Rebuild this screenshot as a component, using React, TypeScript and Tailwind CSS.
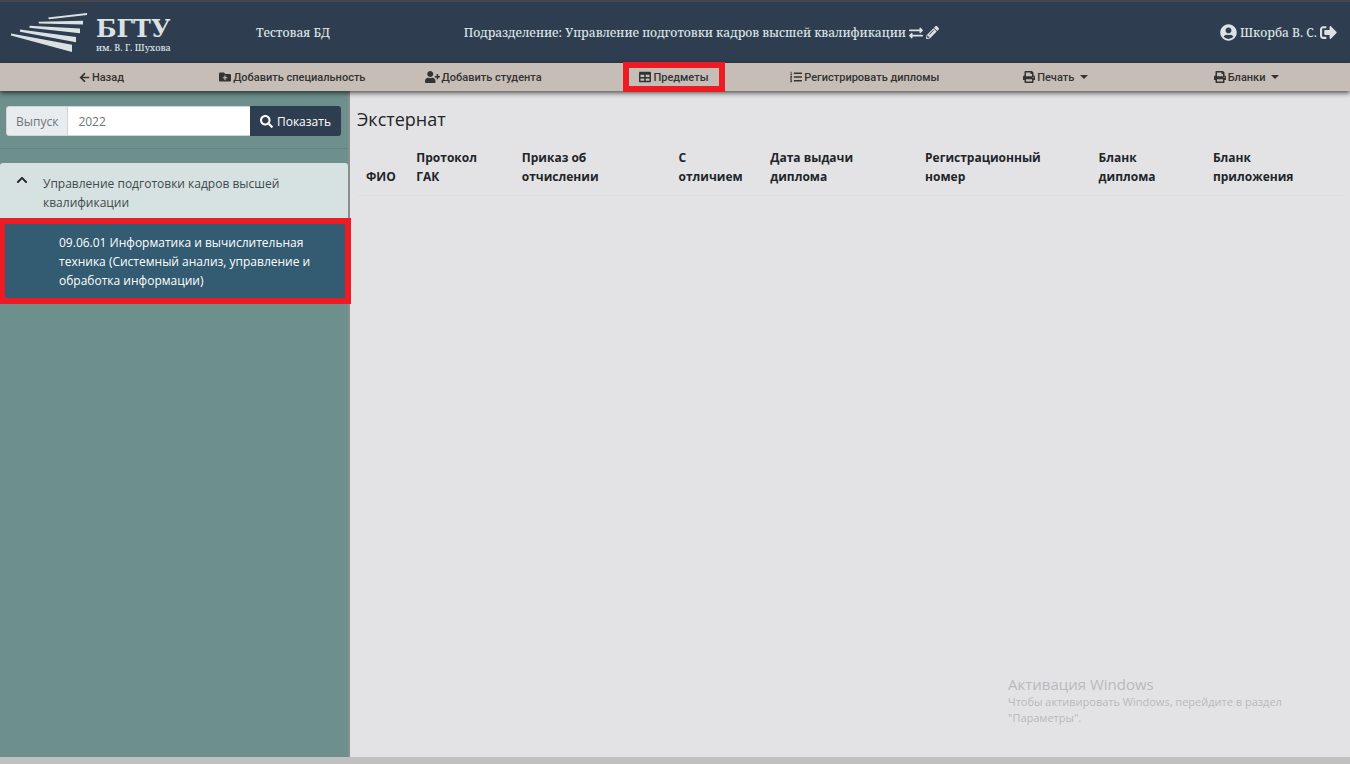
import type { ReactNode } from "react";
import {
  FaArrowLeft,
  FaChevronUp,
  FaExchangeAlt,
  FaFolderPlus,
  FaListOl,
  FaPencilAlt,
  FaPrint,
  FaSearch,
  FaSignOutAlt,
  FaTable,
  FaUserCircle,
  FaUserPlus,
} from "react-icons/fa";

const serif = "font-['Noto_Serif','DejaVu_Serif_Condensed','DejaVu_Serif',serif]";

function Logo() {
  return (
    <a href="#" aria-label="БГТУ им. В. Г. Шухова" className="flex items-center gap-2 text-[#dce2e4]">
      <svg viewBox="0 0 77 40" className="h-10 w-[77px]" fill="currentColor" aria-hidden="true">
        <path d="M37 4.600 76 0v2.100L38 6.200z" />
        <path d="M27.500 8.800 72 7.800v3.800L28 10.600z" />
        <path d="M18.500 12.800 69 15.600v4.600L18.500 14.800z" />
        <path d="M9 16.600 65 24v5.200L9 18.800z" />
        <path d="M0 20.400 61 31.800V39L0 22.600z" />
      </svg>
      <span className="flex flex-col gap-[1px] pt-[5px]">
        <span className="font-['DejaVu_Serif',serif] text-[24px] font-bold leading-6">БГТУ</span>
        <span className={`text-[9px] leading-3 ${serif}`}>им. В. Г. Шухова</span>
      </span>
    </a>
  );
}

function NavItem({ icon, label, caret }: { icon: ReactNode; label: string; caret?: boolean }) {
  return (
    <button type="button" className="flex h-7 items-center justify-center gap-[2px] whitespace-nowrap">
      {icon}
      <span>{label}</span>
      {caret && <span className="ml-1 border-x-4 border-t-4 border-x-transparent border-t-[#333]" />}
    </button>
  );
}

const columns = [
  { lines: ["ФИО"], width: "w-[5.1%]" },
  { lines: ["Протокол", "ГАК"], width: "w-[10.7%]" },
  { lines: ["Приказ об", "отчислении"], width: "w-[15.9%]" },
  { lines: ["С", "отличием"], width: "w-[9.3%]" },
  { lines: ["Дата выдачи", "диплома"], width: "w-[15.7%]" },
  { lines: ["Регистрационный", "номер"], width: "w-[17.6%]" },
  { lines: ["Бланк", "диплома"], width: "w-[11.6%]" },
  { lines: ["Бланк", "приложения"], width: "w-[14.1%]" },
];

export default function App() {
  return (
    <div className="flex min-h-screen flex-col border-t-2 border-[#45474c] bg-[#e3e3e5] font-['Open_Sans','Noto_Sans',sans-serif] text-[12px] leading-[19px] text-[#212529]">
      <header
        className={`grid h-[61px] grid-cols-[15%_13.4%_47.1%_1fr] items-center bg-[#2e3e50] text-[12px] font-medium text-[#dce2e4] ${serif}`}
      >
        <div className="pl-[11px]">
          <Logo />
        </div>
        <div className="text-center">Тестовая БД</div>
        <div className="flex items-center justify-center gap-[3px] whitespace-nowrap">
          <span>Подразделение: Управление подготовки кадров высшей квалификации</span>
          <button type="button" aria-label="Сменить подразделение">
            <FaExchangeAlt className="size-[14px]" />
          </button>
          <button type="button" aria-label="Редактировать">
            <FaPencilAlt className="size-[13px]" />
          </button>
        </div>
        <div className="flex items-center justify-end gap-[3px] pr-[13px]">
          <FaUserCircle className="size-[17px]" />
          <span>Шкорба В. С.</span>
          <button type="button" aria-label="Выйти">
            <FaSignOutAlt className="size-[17px]" />
          </button>
        </div>
      </header>

      <nav className="relative z-10 grid h-7 grid-cols-7 bg-[#c5bdb6] pl-[6px] pr-2 font-[Roboto,sans-serif] text-[11px] font-medium text-[#333] shadow-[0_2px_5px_rgba(0,0,0,0.65)]">
        <NavItem icon={<FaArrowLeft className="size-[11px]" />} label="Назад" />
        <NavItem icon={<FaFolderPlus className="size-3" />} label="Добавить специальность" />
        <NavItem icon={<FaUserPlus className="h-3 w-[15px]" />} label="Добавить студента" />
        <div className="relative grid">
          <NavItem icon={<FaTable className="size-3" />} label="Предметы" />
          <span className="pointer-events-none absolute left-1/2 top-1/2 h-[30px] w-[102px] -translate-x-1/2 -translate-y-1/2 border-6 border-[#ed1c24]" />
        </div>
        <NavItem icon={<FaListOl className="size-3" />} label="Регистрировать дипломы" />
        <NavItem icon={<FaPrint className="size-3" />} label="Печать" caret />
        <NavItem icon={<FaPrint className="size-3" />} label="Бланки" caret />
      </nav>

      <div className="flex flex-1">
        <aside className="w-[350px] shrink-0 border-r-2 border-[#8b8e8e] bg-[#6d908c]">
          <form className="flex border-b border-[#64857f] pb-3 pl-[6px] pr-[7px] pt-[15px]">
            <label
              htmlFor="year"
              className="flex items-center rounded-l-[3px] border border-[#ced4da] bg-[#e9ecef] px-[9px] text-[#6c757d]"
            >
              Выпуск
            </label>
            <input
              id="year"
              defaultValue="2022"
              className="h-[30px] w-0 flex-1 border-y border-[#ced4da] bg-white px-[10px] text-[#6c757d] outline-none"
            />
            <button type="button" className="flex items-center gap-1 rounded-r-[3px] bg-[#2e3e50] px-[10px] text-white">
              <FaSearch className="size-[13px]" />
              Показать
            </button>
          </form>
          <button
            type="button"
            className="mt-[14px] flex w-full items-start rounded-t-[3px] bg-[#d6e2e1] pb-[6px] pl-4 pr-6 pt-[11px] text-left text-[#41494c]"
          >
            <FaChevronUp className="size-3 shrink-0 text-[#212529]" />
            <span className="ml-[15px]">
              Управление подготовки кадров высшей
              <br />
              квалификации
            </span>
          </button>
          <a
            href="#"
            className="-ml-px -mr-[3px] block border-6 border-[#ed1c24] bg-[#335b71] pb-2 pl-[54px] pt-[9px] text-white"
          >
            09.06.01 Информатика и вычислительная
            <br />
            техника (Системный анализ, управление и
            <br />
            обработка информации)
          </a>
        </aside>

        <main className="flex flex-1 flex-col justify-between px-[7px] pt-4">
          <div>
            <h1 className="text-[18px] font-medium leading-6">Экстернат</h1>
            <table className="mt-2 w-full table-fixed border-b border-[#dfdfe2]">
              <thead>
                <tr>
                  {columns.map((c, i) => (
                    <th key={i} className={`whitespace-nowrap px-[9px] py-[9px] text-left align-bottom font-bold ${c.width}`}>
                      {c.lines.map((line) => (
                        <span key={line} className="block">
                          {line}
                        </span>
                      ))}
                    </th>
                  ))}
                </tr>
              </thead>
            </table>
          </div>
          <div className="mb-[31px] mr-3 w-[323px] self-end text-[#b9b9bb]">
            <p className="text-[15px] leading-5">Активация Windows</p>
            <p className="text-[11px] leading-4">
              Чтобы активировать Windows, перейдите в раздел
              <br />
              "Параметры".
            </p>
          </div>
        </main>
      </div>
      <footer className="h-[7px] bg-[#c0c0c0]" />
    </div>
  );
}
